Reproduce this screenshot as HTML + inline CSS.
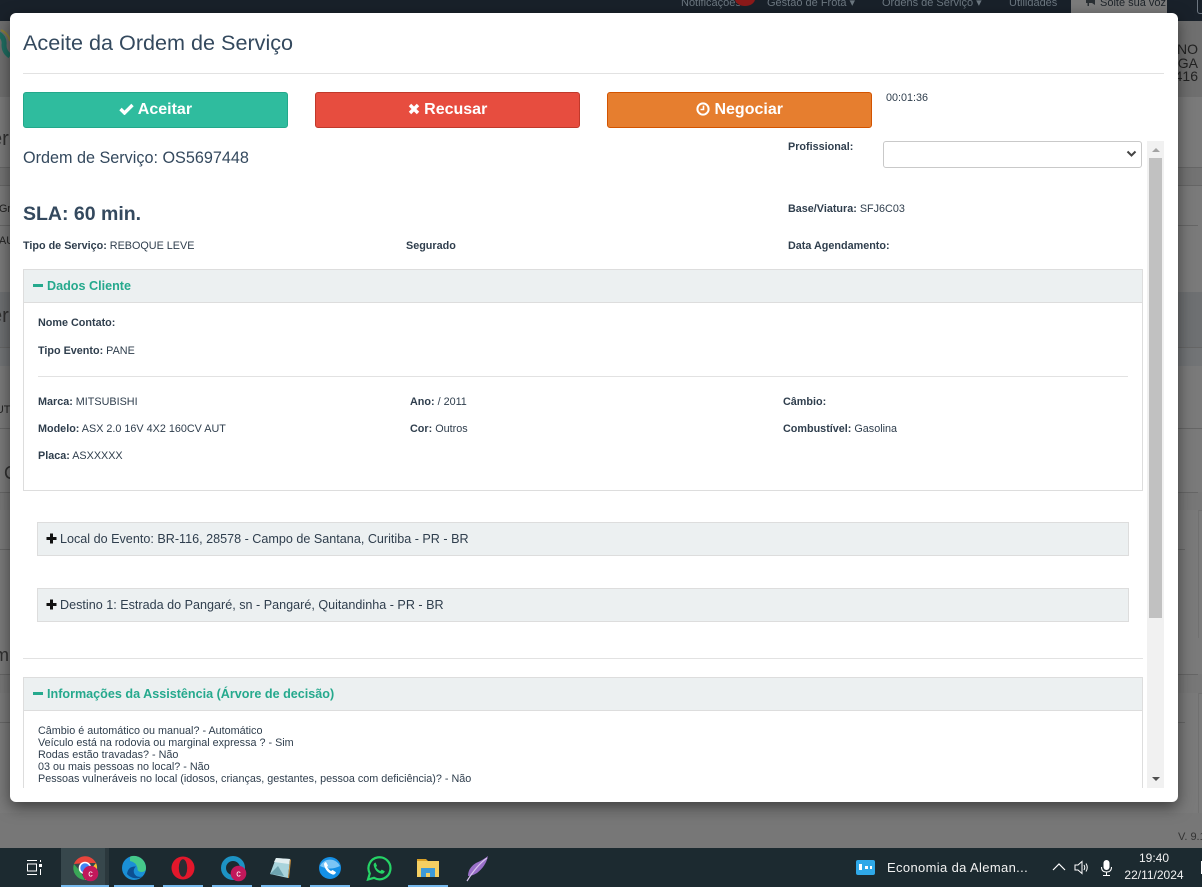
<!DOCTYPE html>
<html lang="pt-BR">
<head>
<meta charset="utf-8">
<title>Aceite da Ordem de Serviço</title>
<style>
html,body{margin:0;padding:0}
body{width:1202px;height:887px;position:relative;overflow:hidden;background:#7a7a7a;font-family:"Liberation Sans",Arial,sans-serif;color:#2f3e4d}
.a{position:absolute;white-space:nowrap}
.line{position:absolute;background:#666;height:1px}
.modal{position:absolute;left:10px;top:13px;width:1168px;height:789px;background:#fff;border-radius:6px;box-shadow:0 5px 15px rgba(0,0,0,.5)}
.lbl{position:absolute;white-space:nowrap;font-size:10.8px;line-height:12px;color:#2f3e4d}
.lbl b{color:#2f3e4d}
.btn{position:absolute;top:92px;height:34px;border-radius:3px;color:#fff;font-weight:bold;font-size:16px;line-height:34px;text-align:center;border:1px solid}
.hl{position:absolute;background:#e2e2e2;height:1px}
.ph{position:absolute;box-sizing:border-box;background:#ecf0f1;border:1px solid #dddddd}
.teal{color:#25a98d;font-weight:bold}
.nav{font-size:11px;color:#6c7780;line-height:12px;top:-3px}
</style>
</head>
<body>
<!-- top navigation -->
<div class="a" style="left:0;top:0;width:1202px;height:21px;background:#19212a"></div>
<div class="a nav" style="left:681px">Notificações</div>
<div class="a" style="left:735px;top:-8px;width:20px;height:14px;border-radius:50%;background:#8b1a1a"></div>
<div class="a nav" style="left:767px">Gestão de Frota ▾</div>
<div class="a nav" style="left:882px">Ordens de Serviço ▾</div>
<div class="a nav" style="left:1009px">Utilidades</div>
<div class="a" style="left:1071px;top:0;width:96px;height:13px;background:#7b7b7b"></div>
<div class="a" style="left:1100px;top:-3px;font-size:11px;color:#1d2329;line-height:12px">Solte sua voz</div>
<svg class="a" style="left:1086px;top:0" width="11" height="6" viewBox="0 0 11 6"><path d="M0 0 H6 L9 -2 V5 L6 3 H3 V6 H1.5 V3 H0Z" fill="#2a2f33"/></svg>
<div class="a" style="left:1197px;top:-4px;width:14px;height:16px;border:1px solid #6d7680;border-radius:3px"></div>

<!-- page behind the overlay -->
<div class="a" style="left:0;top:21px;width:1202px;height:76px;background:#6f6f6f"></div>
<div class="a" style="left:0;top:167px;width:1202px;height:18px;background:#737373"></div>
<div class="a" style="left:0;top:292px;width:1202px;height:55px;background:#6e7072"></div>
<div class="a" style="left:0;top:347px;width:1202px;height:19px;background:#727476"></div>
<div class="a" style="left:0;top:492px;width:1202px;height:18px;background:#777"></div>
<div class="a" style="left:0;top:674px;width:1202px;height:19px;background:#777"></div>
<div class="a" style="left:0;top:813px;width:1202px;height:35px;background:#777"></div>
<div class="line" style="left:0;top:167px;width:1202px"></div>
<div class="line" style="left:0;top:185px;width:1202px"></div>
<div class="line" style="left:0;top:225px;width:1198px"></div>
<div class="line" style="left:0;top:347px;width:1202px"></div>
<div class="line" style="left:0;top:428px;width:1202px"></div>
<div class="line" style="left:0;top:492px;width:1198px"></div>
<div class="line" style="left:0;top:549px;width:1185px"></div>
<div class="line" style="left:0;top:674px;width:1198px"></div>
<div class="line" style="left:0;top:722px;width:1185px"></div>
<div class="line" style="left:1198px;top:510px;width:4px;background:#6e6e6e"></div>
<div class="line" style="left:1198px;top:693px;width:4px;background:#6e6e6e"></div>
<div class="a" style="left:1198px;top:510px;width:1px;height:128px;background:#707070"></div>
<div class="a" style="left:1198px;top:693px;width:1px;height:120px;background:#707070"></div>

<!-- text peeking from behind modal -->
<svg class="a" style="left:0;top:28px" width="10" height="34" viewBox="0 0 10 34"><path d="M-1 6 Q5 10 4 17 Q4 24 10 28" fill="none" stroke="#1f6e61" stroke-width="5"/><path d="M1 2 Q8 5 10 13" fill="none" stroke="#8b7f3a" stroke-width="2"/></svg>
<div class="a" style="left:-9px;top:128px;font-size:20px;color:#303030;line-height:22px">er</div>
<div class="a" style="left:-1px;top:203px;font-size:10.8px;color:#222;line-height:12px">Gr</div>
<div class="a" style="left:-1px;top:235px;font-size:10.8px;color:#222;line-height:12px">AU</div>
<div class="a" style="left:-9px;top:305px;font-size:20px;color:#303030;line-height:22px">er</div>
<div class="a" style="left:-4px;top:404px;font-size:10.8px;color:#222;line-height:12px">UT</div>
<div class="a" style="left:4px;top:463px;font-size:18px;color:#303030;line-height:20px">C</div>
<div class="a" style="left:-6px;top:645px;font-size:18px;color:#303030;line-height:20px">m</div>
<div class="a" style="left:1158px;top:43px;width:40px;font-size:14px;line-height:13.5px;color:#222;text-align:right">NO<br>RGA<br>416</div>
<div class="a" style="left:1178px;top:831px;font-size:11px;color:#333;line-height:13px">V. 9.1</div>

<!-- modal -->
<div class="modal"></div>
<div class="a" style="left:23px;top:30px;font-size:21.6px;line-height:26px;color:#34495e">Aceite da Ordem de Serviço</div>
<div class="hl" style="left:23px;top:73px;width:1141px"></div>

<div class="btn" style="left:23px;width:263px;background:#2fbc9e;border-color:#23a88b">
  <svg width="15" height="12" viewBox="0 0 15 12" style="vertical-align:-1px"><path d="M1.5 6 L5.5 10 L13.5 2" fill="none" stroke="#fff" stroke-width="3.4"/></svg> Aceitar
</div>
<div class="btn" style="left:315px;width:263px;background:#e74d3f;border-color:#c0392b">
  <svg width="12" height="12" viewBox="0 0 12 12" style="vertical-align:-1px"><path d="M2 2 L10 10 M10 2 L2 10" fill="none" stroke="#fff" stroke-width="3.4"/></svg> Recusar
</div>
<div class="btn" style="left:607px;width:263px;background:#e67e2f;border-color:#d35400">
  <svg width="14" height="14" viewBox="0 0 14 14" style="vertical-align:-2px"><circle cx="7" cy="7" r="5.6" fill="none" stroke="#fff" stroke-width="2"/><path d="M7.5 3.6 V7.5 H4.5" fill="none" stroke="#fff" stroke-width="1.6"/></svg> Negociar
</div>
<div class="lbl" style="left:886px;top:92px">00:01:36</div>

<div class="a" style="left:23px;top:149px;font-size:16.2px;line-height:19px;color:#34495e">Ordem de Serviço: OS5697448</div>
<div class="lbl" style="left:788px;top:141px"><b>Profissional:</b></div>
<div class="a" style="left:883px;top:141px;width:257px;height:25px;border:1px solid #c9c9c9;border-radius:3px;background:#fff"></div>
<svg class="a" style="left:1126px;top:150px" width="11" height="8" viewBox="0 0 11 8"><path d="M1.5 1.5 L5.5 5.5 L9.5 1.5" fill="none" stroke="#444" stroke-width="2"/></svg>

<div class="a" style="left:23px;top:202px;font-size:19.5px;line-height:24px;font-weight:bold;color:#34495e">SLA: 60 min.</div>
<div class="lbl" style="left:788px;top:203px"><b>Base/Viatura:</b> SFJ6C03</div>
<div class="lbl" style="left:23px;top:240px"><b>Tipo de Serviço:</b> REBOQUE LEVE</div>
<div class="lbl" style="left:406px;top:240px"><b>Segurado</b></div>
<div class="lbl" style="left:788px;top:240px"><b>Data Agendamento:</b></div>

<!-- Dados Cliente -->
<div class="a" style="left:23px;top:269px;width:1120px;height:222px;box-sizing:border-box;border:1px solid #dddddd"></div>
<div class="ph" style="left:23px;top:269px;width:1120px;height:34px"></div>
<div class="a" style="left:33px;top:284px;width:10px;height:3px;background:#25a98d"></div>
<div class="a teal" style="left:47px;top:278px;line-height:17px;font-size:12.6px">Dados Cliente</div>
<div class="lbl" style="left:38px;top:317px"><b>Nome Contato:</b></div>
<div class="lbl" style="left:38px;top:345px"><b>Tipo Evento:</b> PANE</div>
<div class="hl" style="left:38px;top:376px;width:1090px"></div>
<div class="lbl" style="left:38px;top:396px"><b>Marca:</b> MITSUBISHI</div>
<div class="lbl" style="left:410px;top:396px"><b>Ano:</b> / 2011</div>
<div class="lbl" style="left:783px;top:396px"><b>Câmbio:</b></div>
<div class="lbl" style="left:38px;top:423px"><b>Modelo:</b> ASX 2.0 16V 4X2 160CV AUT</div>
<div class="lbl" style="left:410px;top:423px"><b>Cor:</b> Outros</div>
<div class="lbl" style="left:783px;top:423px"><b>Combustível:</b> Gasolina</div>
<div class="lbl" style="left:38px;top:450px"><b>Placa:</b> ASXXXXX</div>

<!-- Local -->
<div class="ph" style="left:37px;top:522px;width:1092px;height:34px"></div>
<svg class="a" style="left:46px;top:533px" width="11" height="11" viewBox="0 0 11 11"><path d="M5.5 .5 V10.5 M.5 5.5 H10.5" stroke="#111" stroke-width="3"/></svg>
<div class="a" style="left:60px;top:531px;font-size:12.6px;line-height:17px;color:#2f3e4d">Local do Evento: BR-116, 28578 - Campo de Santana, Curitiba - PR - BR</div>

<div class="ph" style="left:37px;top:588px;width:1092px;height:34px"></div>
<svg class="a" style="left:46px;top:599px" width="11" height="11" viewBox="0 0 11 11"><path d="M5.5 .5 V10.5 M.5 5.5 H10.5" stroke="#111" stroke-width="3"/></svg>
<div class="a" style="left:60px;top:597px;font-size:12.6px;line-height:17px;color:#2f3e4d">Destino 1: Estrada do Pangaré, sn - Pangaré, Quitandinha - PR - BR</div>

<div class="hl" style="left:23px;top:658px;width:1120px"></div>

<!-- Informações -->
<div class="a" style="left:23px;top:677px;width:1120px;height:111px;box-sizing:border-box;border:1px solid #dddddd;border-bottom:0"></div>
<div class="ph" style="left:23px;top:677px;width:1120px;height:34px"></div>
<div class="a" style="left:33px;top:692px;width:10px;height:3px;background:#25a98d"></div>
<div class="a teal" style="left:47px;top:686px;line-height:17px;font-size:12.6px">Informações da Assistência (Árvore de decisão)</div>
<div class="a" style="left:38px;top:725px;font-size:10.8px;line-height:12px;color:#2f3e4d">Câmbio é automático ou manual? - Automático<br>Veículo está na rodovia ou marginal expressa ? - Sim<br>Rodas estão travadas? - Não<br>03 ou mais pessoas no local? - Não<br>Pessoas vulneráveis no local (idosos, crianças, gestantes, pessoa com deficiência)? - Não</div>

<!-- scrollbar -->
<div class="a" style="left:1147px;top:141px;width:17px;height:647px;background:#f1f1f1"></div>
<div class="a" style="left:1149px;top:158px;width:13px;height:460px;background:#c1c1c1"></div>
<div class="a" style="left:1152px;top:148px;width:0;height:0;border-left:4px solid transparent;border-right:4px solid transparent;border-bottom:4px solid #a3a3a3"></div>
<div class="a" style="left:1152px;top:777px;width:0;height:0;border-left:4px solid transparent;border-right:4px solid transparent;border-top:4px solid #505050"></div>

<!-- taskbar -->
<div class="a" style="left:0;top:848px;width:1202px;height:39px;background:#1c2a30"></div>
<svg class="a" style="left:25px;top:859px" width="18" height="17" viewBox="0 0 18 17"><path d="M2 1.5 H12 M2 15.5 H12 M2.5 5 H11.5 V12 H2.5 Z" fill="none" stroke="#fff" stroke-width="1"/><rect x="14" y="5" width="3" height="3" fill="#fff"/><path d="M15.5 1 V3 M15.5 10 V16" stroke="#fff"/></svg>
<div class="a" style="left:61px;top:848px;width:44px;height:39px;background:#37474c"></div>
<div class="a" style="left:105px;top:848px;width:4px;height:39px;background:#2b383d"></div>
<!-- running indicators -->
<div class="a" style="left:61px;top:885px;width:48px;height:2px;background:#76b9ed"></div>
<div class="a" style="left:114px;top:885px;width:40px;height:2px;background:#76b9ed"></div>
<div class="a" style="left:163px;top:885px;width:40px;height:2px;background:#76b9ed"></div>
<div class="a" style="left:212px;top:885px;width:40px;height:2px;background:#76b9ed"></div>
<div class="a" style="left:261px;top:885px;width:40px;height:2px;background:#76b9ed"></div>
<div class="a" style="left:310px;top:885px;width:40px;height:2px;background:#76b9ed"></div>
<div class="a" style="left:408px;top:885px;width:40px;height:2px;background:#76b9ed"></div>
<!-- chrome -->
<svg class="a" style="left:72px;top:855px" width="28" height="28" viewBox="0 0 28 28">
<path d="M2 9 A12 12 0 0 1 24 8 L13 8 Z" fill="#e8453c"/><path d="M24 8 A12 12 0 0 1 13 25 L19 14 Z" fill="#f9bb2d"/><path d="M13 25 A12 12 0 0 1 2 9 L8 16 Z" fill="#3aa757"/><circle cx="13" cy="13" r="5.5" fill="#4285f4" stroke="#fff" stroke-width="1.6"/>
<circle cx="18.5" cy="18.5" r="7.8" fill="#c2185b"/><text x="18.5" y="21.5" font-size="9" text-anchor="middle" fill="#fff" font-family="Liberation Sans">c</text></svg>
<!-- edge -->
<svg class="a" style="left:121px;top:855px" width="26" height="26" viewBox="0 0 26 26">
<circle cx="13" cy="13" r="12" fill="#1a8fd6"/><path d="M9 1.6 A12 12 0 0 1 25 13 Q25 17 20.5 17 Q16 17 16.5 13 Q15 7 9 6 Q9 4 9 1.6Z" fill="#45c98a"/><path d="M6 19 Q7 11 15 11.5 Q12 14 13 18 Q15 23 21.5 21.5 A12 12 0 0 1 6 19Z" fill="#0c4f92"/></svg>
<!-- opera -->
<svg class="a" style="left:171px;top:856px" width="24" height="24" viewBox="0 0 24 24"><ellipse cx="12" cy="12" rx="11.5" ry="11.5" fill="#e3172b"/><ellipse cx="12" cy="12" rx="4.2" ry="8.8" fill="#2b2d33"/></svg>
<!-- opera-like with badge -->
<svg class="a" style="left:220px;top:855px" width="28" height="28" viewBox="0 0 28 28"><circle cx="13" cy="13" r="9.5" fill="none" stroke="#1d93c4" stroke-width="5"/><circle cx="18.5" cy="18.5" r="7.8" fill="#c2185b"/><text x="18.5" y="21.5" font-size="9" text-anchor="middle" fill="#fff" font-family="Liberation Sans">c</text></svg>
<!-- notepad -->
<svg class="a" style="left:268px;top:856px" width="24" height="24" viewBox="0 0 24 24"><path d="M8 2 L22 3 L20 22 L2 18 Z" fill="#a9d4dc"/><path d="M8 2 L22 3 L21 8 L6 6 Z" fill="#e2eef0"/><path d="M2 18 L10 10 L16 20 Z" fill="#6ea4b0"/><path d="M20 22 L22 3 L23 4 L21 22Z" fill="#c58b3c"/></svg>
<!-- phone -->
<svg class="a" style="left:318px;top:856px" width="24" height="24" viewBox="0 0 24 24"><circle cx="12" cy="12" r="11" fill="#1590e6"/><path d="M2 10 A11 11 0 0 1 22 10 Q12 15 2 10Z" fill="#7cc5f5"/><path d="M8 6 L10 9.5 L9 11 Q11 14 13 15 L14.6 14 L18 16.2 Q17 19 14.5 18.5 Q7.5 16 6 8.5 Q6 6.5 8 6Z" fill="#fff"/></svg>
<!-- whatsapp -->
<svg class="a" style="left:366px;top:855px" width="26" height="26" viewBox="0 0 26 26"><path d="M2 24.5 L3.8 18.5 A11 11 0 1 1 8 22.8 Z" fill="none" stroke="#25d366" stroke-width="2.2"/><path d="M9.5 7.5 L11 10.8 L10 12.3 Q11.8 15 14.3 16 L15.8 14.6 L18.8 16.2 Q18 18.8 15.6 18.8 Q9 17.2 7.6 10 Q7.8 8 9.5 7.5Z" fill="#25d366"/></svg>
<!-- folder -->
<svg class="a" style="left:416px;top:858px" width="24" height="22" viewBox="0 0 24 22"><path d="M1 1 H10 L12 3 H1 Z" fill="#d9a026"/><rect x="1" y="3" width="22" height="16" fill="#f5cf62"/><rect x="5" y="10" width="14" height="9" fill="#3d9ad9"/><rect x="10" y="15" width="4" height="4" fill="#f5cf62"/></svg>
<!-- feather -->
<svg class="a" style="left:465px;top:855px" width="24" height="27" viewBox="0 0 24 27"><path d="M23 1 Q21 11 12 18 Q7 21 3 21 Q3 13 11 8 Q18 5 23 1Z" fill="#9a70c9"/><path d="M22 3 Q12 10 2 26" fill="none" stroke="#d8c4ee" stroke-width="1.2"/></svg>

<!-- tray -->
<div class="a" style="left:856px;top:860px;width:19px;height:15px;background:#2fa8e8;border-radius:2px"></div>
<div class="a" style="left:859px;top:864px;width:3px;height:6px;background:#fff"></div>
<div class="a" style="left:865px;top:866px;width:3px;height:3px;background:#fff"></div>
<div class="a" style="left:870px;top:866px;width:2px;height:3px;background:#fff"></div>
<div class="a" style="left:887px;top:860px;font-size:13px;line-height:16px;color:#f2f2f2;letter-spacing:.35px">Economia da Aleman...</div>
<svg class="a" style="left:1052px;top:862px" width="14" height="9" viewBox="0 0 14 9"><path d="M1 8 L7 2 L13 8" fill="none" stroke="#fff" stroke-width="1.2"/></svg>
<svg class="a" style="left:1074px;top:860px" width="17" height="15" viewBox="0 0 17 15"><path d="M1 5 H4 L8 1.5 V13.5 L4 10 H1 Z" fill="none" stroke="#fff" stroke-width="1"/><path d="M10 5 Q11.5 7.5 10 10 M12 3.5 Q14.5 7.5 12 11.5" fill="none" stroke="#fff" stroke-width="1"/></svg>
<svg class="a" style="left:1100px;top:859px" width="13" height="18" viewBox="0 0 13 18"><rect x="3.5" y="1" width="6" height="10" rx="3" fill="#fff"/><path d="M1.5 8 Q1.5 13 6.5 13 Q11.5 13 11.5 8 M6.5 13 V16 M3 16.5 H10" fill="none" stroke="#fff" stroke-width="1"/></svg>
<div class="a" style="left:1120px;top:850px;width:68px;text-align:center;font-size:12px;line-height:17px;color:#f2f2f2">19:40<br>22/11/2024</div>
<div class="a" style="left:1201px;top:861px;width:1px;height:13px;background:#fff"></div>
</body>
</html>
